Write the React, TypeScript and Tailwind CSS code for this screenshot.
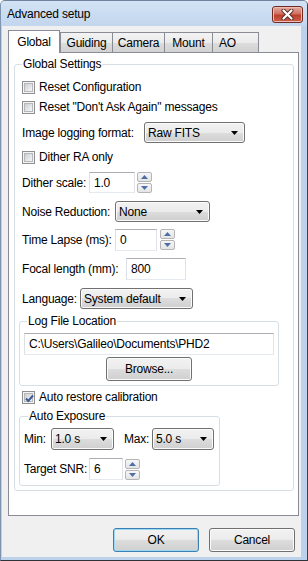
import React from "react";

function Check({ checked }: { checked?: boolean }) {
  return (
    <span className="relative flex w-[13px] h-[13px] shrink-0 border border-[#8f8f8f] bg-[#f4f4f4] p-[1px]">
      <span className="flex-1 border border-[#b4b7bb] bg-[linear-gradient(135deg,#cdcfd1,#f6f6f6)]" />
      {checked && (
        <svg className="absolute left-[1px] top-[1px]" width="11" height="11" viewBox="0 0 11 11">
          <path d="M2 5.5 L4.3 8 L9 2.5" fill="none" stroke="#3f5b95" strokeWidth="2" />
        </svg>
      )}
    </span>
  );
}

function CheckRow({ label, checked }: { label: string; checked?: boolean }) {
  return (
    <div className="flex items-center h-[16px] gap-[4px]">
      <Check checked={checked} />
      <span>{label}</span>
    </div>
  );
}

function Arrow() {
  return (
    <svg width="7" height="4" viewBox="0 0 7 4" className="shrink-0">
      <path d="M0 0 H7 L3.5 4 Z" fill="#000" />
    </svg>
  );
}

function Combo({ className, text }: { className: string; text: string }) {
  return (
    <div
      className={
        "flex items-center justify-between pl-[3px] pr-[6px] border border-[#707070] rounded-[3px] bg-[linear-gradient(#f2f2f2,#ebebeb_50%,#dddddd_50%,#cfcfcf)] shadow-[inset_0_0_0_1px_#fbfbfb] " +
        className
      }
    >
      <span>{text}</span>
      <Arrow />
    </div>
  );
}

function TextBox({ className, text }: { className: string; text: string }) {
  return (
    <div
      className={
        "flex items-center pl-[4px] bg-white border border-t-[#abadb3] border-l-[#dbdfe6] border-r-[#e2e3ea] border-b-[#e3e9ef] " +
        className
      }
    >
      {text}
    </div>
  );
}

function SpinHalf({ up }: { up?: boolean }) {
  return (
    <div className="flex items-center justify-center w-[15px] h-[10px] border border-[#b5b5b5] rounded-[2px] bg-[linear-gradient(#f6f6f6,#e4e4e4)]">
      <svg width="7" height="4" viewBox="0 0 7 4">
        <path d={up ? "M0 4 H7 L3.5 0 Z" : "M0 0 H7 L3.5 4 Z"} fill="#4f6ea8" />
      </svg>
    </div>
  );
}

function Spin() {
  return (
    <div className="flex flex-col gap-[1px] ml-[2px]">
      <SpinHalf up />
      <SpinHalf />
    </div>
  );
}

function Button({ label, primary }: { label: string; primary?: boolean }) {
  return (
    <div
      className={
        "flex items-center justify-center w-[86px] h-[24px] rounded-[3px] border bg-[linear-gradient(#f2f2f2,#ebebeb_50%,#dddddd_50%,#cfcfcf)] " +
        (primary
          ? "border-[#3c7fb1] shadow-[inset_0_0_0_1px_#9ad8f4]"
          : "border-[#707070] shadow-[inset_0_0_0_1px_#fbfbfb]")
      }
    >
      {label}
    </div>
  );
}

const tabs = [
  { name: "Guiding", w: "w-[53px] justify-center" },
  { name: "Camera", w: "w-[53px] -ml-px justify-center" },
  { name: "Mount", w: "w-[49px] -ml-px justify-center" },
  { name: "AO", w: "w-[47px] -ml-px justify-start pl-[6px]" },
];

export default function App() {
  return (
    <div className="w-[308px] h-[561px] flex flex-col bg-[#bcd2eb] border border-l-[#7e93ad] border-t-[#6f839c] border-r-[#3c4149] border-b-[#2f3338] rounded-t-[5px] overflow-hidden font-['Liberation_Sans',Arial,sans-serif] text-[12px] leading-[16px] tracking-[-0.2px] text-black">
      <div className="h-[25px] flex items-center pl-[6px] pr-[4px] bg-[linear-gradient(#d4e3f5,#c2d6ee)]">
        <span className="mt-[1px]">Advanced setup</span>
        <div className="ml-auto mt-[1px] flex items-center justify-center w-[31px] h-[17px] rounded-[3px] border border-[#6e2b22] bg-[linear-gradient(#e6aca2,#cf6f5f_45%,#bd3f2c_55%,#c9604c)] shadow-[inset_0_0_0_1px_#eebcb3]">
          <svg width="13" height="11" viewBox="0 0 13 11">
            <path d="M2.5 1.5 L10.5 9.5 M10.5 1.5 L2.5 9.5" stroke="#5b2a24" strokeWidth="4" strokeLinecap="round" />
            <path d="M2.5 1.5 L10.5 9.5 M10.5 1.5 L2.5 9.5" stroke="#ffffff" strokeWidth="2.2" strokeLinecap="round" />
          </svg>
        </div>
      </div>

      <div className="flex-1 flex flex-col ml-[1px] mr-[6px] mb-[3px] bg-[#f0f0f0] pt-[4px]">
        <div className="flex items-end h-[22px] ml-[6px]">
          <div className="relative z-10 flex items-start justify-center pt-[3px] w-[52px] h-[23px] -mb-px bg-white border border-b-0 border-[#898c95]">
            Global
          </div>
          {tabs.map((t) => (
            <div
              key={t.name}
              className={
                "flex items-center h-[20px] border border-b-0 border-[#898c95] bg-[linear-gradient(#f3f3f3,#ebebeb_50%,#dddddd_50%,#d2d2d2)] " +
                t.w
              }
            >
              {t.name}
            </div>
          ))}
        </div>

        <div className="relative ml-[6px] w-[291px] h-[464px] bg-white border border-[#898c95] pt-[3px]">
          <fieldset className="ml-[5px] w-[280px] border border-[#d5dfe5] rounded-[3px] pl-[7px] pt-[7px] pb-[4px]">
            <legend className="px-[1px]">Global Settings</legend>

            <CheckRow label="Reset Configuration" />
            <div className="mt-[4px]">
              <CheckRow label={'Reset "Don\'t Ask Again" messages'} />
            </div>

            <div className="mt-[7px] flex items-center h-[21px]">
              <span className="w-[122px]">Image logging format:</span>
              <Combo className="w-[101px] h-[21px]" text="Raw FITS" />
            </div>

            <div className="mt-[6px]">
              <CheckRow label="Dither RA only" />
            </div>

            <div className="mt-[7px] flex items-center h-[21px]">
              <span className="w-[67px]">Dither scale:</span>
              <TextBox className="w-[46px] h-[21px]" text="1.0" />
              <Spin />
            </div>

            <div className="mt-[8px] flex items-center h-[21px]">
              <span className="w-[93px]">Noise Reduction:</span>
              <Combo className="w-[95px] h-[21px]" text="None" />
            </div>

            <div className="mt-[7px] flex items-center h-[21px]">
              <span className="w-[93px]">Time Lapse (ms):</span>
              <TextBox className="w-[42px] h-[22px]" text="0" />
              <div className="ml-[1px]">
                <Spin />
              </div>
            </div>

            <div className="mt-[8px] flex items-center h-[22px]">
              <span className="w-[104px]">Focal length (mm):</span>
              <TextBox className="w-[60px] h-[22px]" text="800" />
            </div>

            <div className="mt-[8px] flex items-center h-[21px]">
              <span className="w-[58px]">Language:</span>
              <Combo className="w-[113px] h-[21px]" text="System default" />
            </div>

            <fieldset className="mt-[4px] -ml-[3px] w-[260px] border border-[#d5dfe5] rounded-[3px] pl-[4px] pr-[4px] pt-[4px] pb-[4px]">
              <legend className="ml-[3px] px-[1px]">Log File Location</legend>
              <TextBox className="w-[250px] h-[22px]" text="C:\Users\Galileo\Documents\PHD2" />
              <div className="mt-[2px] flex justify-center">
                <Button label="Browse..." />
              </div>
            </fieldset>

            <div className="mt-[3px]">
              <CheckRow label="Auto restore calibration" checked />
            </div>

            <fieldset className="mt-[3px] -ml-[3px] w-[201px] border border-[#d5dfe5] rounded-[3px] pl-[4px] pt-[4px] pb-[5px]">
              <legend className="ml-[4px] px-[1px]">Auto Exposure</legend>
              <div className="flex items-center h-[22px]">
                <span className="w-[27px]">Min:</span>
                <Combo className="w-[63px] h-[22px]" text="1.0 s" />
                <span className="ml-[10px] w-[28px]">Max:</span>
                <Combo className="w-[62px] h-[22px]" text="5.0 s" />
              </div>
              <div className="mt-[8px] flex items-center h-[22px]">
                <span className="w-[65px]">Target SNR:</span>
                <TextBox className="w-[34px] h-[22px]" text="6" />
                <Spin />
              </div>
            </fieldset>
          </fieldset>
        </div>

        <div className="mt-[12px] flex justify-end gap-[10px] pr-[6px]">
          <Button label="OK" primary />
          <Button label="Cancel" />
        </div>
      </div>
    </div>
  );
}
